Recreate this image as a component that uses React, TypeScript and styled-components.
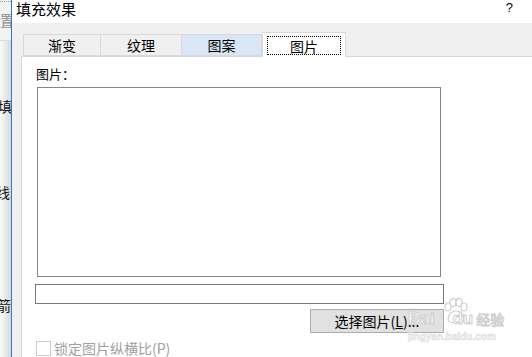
import styled, { createGlobalStyle } from "styled-components";

const GlobalStyle = createGlobalStyle`
  html, body {
    margin: 0;
    padding: 0;
    background: #ffffff;
  }
  body {
    font-family: "Noto Sans CJK SC", "Liberation Sans", sans-serif;
  }
`;

const tabs = ["渐变", "纹理", "图案", "图片"];
const tabWidths = [78, 81, 80, 84];

function App() {
  return (
    <>
      <GlobalStyle />
      <Screen>
        <BackWindow>
          <BackHead>
            <Dots />
            <BackItem $dim $top={8}>置扌</BackItem>
          </BackHead>
          <BackItem $top={57} $shift={-2}>填</BackItem>
          <BackItem $top={70} $shift={-4}>线</BackItem>
          <BackItem $top={97} $shift={-3}>箭</BackItem>
        </BackWindow>
        <Edge />
        <Dialog>
          <TitleBar>
            <Title>填充效果</Title>
            <Help>?</Help>
          </TitleBar>
          <Body>
            <TabRow>
              {tabs.map((t, i) => (
                <Tab
                  key={t}
                  $selected={i === 3}
                  $hover={i === 2}
                  style={{ width: tabWidths[i] }}
                >
                  {i === 3 ? <Focus>{t}</Focus> : t}
                </Tab>
              ))}
            </TabRow>
            <Panel>
              <Label>图片：</Label>
              <PictureBox />
              <Form>
                <PathInput />
                <Button>
                  选择图片(<u>L</u>)...
                </Button>
              </Form>
              <CheckRow>
                <CheckBox />
                <CheckLabel>锁定图片纵横比(P)</CheckLabel>
              </CheckRow>
            </Panel>
          </Body>
        </Dialog>
        <Watermark>
          <Paw viewBox="0 0 26 27">
            <g fill="#fff" stroke="#cfcfcf" strokeWidth="1.2">
              <ellipse cx="6" cy="9" rx="3" ry="4" />
              <ellipse cx="11" cy="4.5" rx="3" ry="4" />
              <ellipse cx="17" cy="4.5" rx="3" ry="4" />
              <ellipse cx="22" cy="9" rx="3" ry="4" />
              <path d="M6 22 C6 16 10 13 14 13 C18 13 22 16 22 22 C22 26 6 26 6 22 Z" />
            </g>
          </Paw>
          <MarkRow>
            <MarkBig>Bai</MarkBig>
            <MarkGap />
            <MarkBig>du</MarkBig>
            <MarkCjk>经验</MarkCjk>
          </MarkRow>
          <MarkUrl>jingyan.baidu.com</MarkUrl>
        </Watermark>
      </Screen>
    </>
  );
}

const Screen = styled.div`
  position: relative;
  display: flex;
  width: 532px;
  height: 357px;
  overflow: hidden;
  background: #ffffff;
`;

const BackWindow = styled.div`
  width: 11px;
  flex: none;
  display: flex;
  flex-direction: column;
  overflow: hidden;
  background: linear-gradient(to right, #fbfbfb, #d9d9d9);
`;

const BackHead = styled.div`
  height: 40px;
  flex: none;
  background: #f3f3f3;
  border-bottom: 1px solid #dcdcdc;
`;

const Dots = styled.div`
  height: 2px;
  margin-top: 1px;
  border-top: 1px dotted #9a9a9a;
`;

const BackItem = styled.div<{ $dim?: boolean; $top: number; $shift?: number }>`
  margin-top: ${(p) => p.$top}px;
  margin-left: ${(p) => p.$shift ?? 0}px;
  white-space: nowrap;
  font-size: 14px;
  line-height: 16px;
  color: ${(p) => (p.$dim ? "#8c8c8c" : "#111111")};
`;

const Edge = styled.div`
  width: 1px;
  flex: none;
  background: #2b79d1;
`;

const Dialog = styled.div`
  flex: 1;
  display: flex;
  flex-direction: column;
  background: #f0f0f0;
`;

const TitleBar = styled.div`
  height: 23px;
  flex: none;
  display: flex;
  align-items: center;
  justify-content: space-between;
  padding: 0 19px 0 4px;
  background: #ffffff;
`;

const Title = styled.div`
  font-size: 15px;
  line-height: 18px;
  margin-top: -6px;
  color: #000000;
`;

const Help = styled.div`
  font-family: "Liberation Sans", sans-serif;
  font-size: 13px;
  margin-top: -8px;
  color: #000000;
`;

const Body = styled.div`
  flex: 1;
  display: flex;
  flex-direction: column;
  padding: 8px 0 0 9px;
`;

const TabRow = styled.div`
  display: flex;
  align-items: flex-end;
  height: 25px;
  padding-left: 2px;
  position: relative;
  z-index: 1;
`;

const Tab = styled.div<{ $selected?: boolean; $hover?: boolean }>`
  box-sizing: border-box;
  height: ${(p) => (p.$selected ? 25 : 22)}px;
  margin-bottom: ${(p) => (p.$selected ? -1 : 0)}px;
  display: flex;
  align-items: center;
  justify-content: center;
  border: 1px solid #d9d9d9;
  border-bottom: ${(p) => (p.$selected ? "none" : "1px solid #d9d9d9")};
  border-left: ${(p) => (p.$selected ? "1px solid #d9d9d9" : "none")};
  background: ${(p) => (p.$selected ? "#ffffff" : p.$hover ? "#d8e6f6" : "#f0f0f0")};
  font-size: 14px;
  line-height: 16px;
  color: #000000;
  &:first-child {
    border-left: 1px solid #d9d9d9;
  }
`;

const Focus = styled.div`
  box-sizing: border-box;
  width: 74px;
  height: 19px;
  margin-top: 1px;
  display: flex;
  align-items: center;
  justify-content: center;
  border: 1px dotted #000000;
`;

const Panel = styled.div`
  flex: 1;
  display: flex;
  flex-direction: column;
  align-items: flex-start;
  padding: 9px 0 0 13px;
  background: #ffffff;
  border-top: 1px solid #d9d9d9;
  border-left: 1px solid #d9d9d9;
`;

const Label = styled.div`
  margin-left: 1px;
  font-size: 13px;
  line-height: 16px;
  color: #000000;
`;

const PictureBox = styled.div`
  box-sizing: border-box;
  width: 404px;
  height: 190px;
  margin: 5px 0 0 2px;
  border: 1px solid #828790;
  background: #ffffff;
`;

const Form = styled.div`
  width: 409px;
  display: flex;
  flex-direction: column;
  align-items: flex-end;
`;

const PathInput = styled.div`
  box-sizing: border-box;
  width: 409px;
  height: 20px;
  margin-top: 7px;
  border: 1px solid #7a7a7a;
  background: #ffffff;
`;

const Button = styled.div`
  box-sizing: border-box;
  width: 134px;
  height: 24px;
  margin-top: 5px;
  display: flex;
  align-items: center;
  justify-content: center;
  border: 1px solid #adadad;
  background: #e1e1e1;
  font-size: 14px;
  line-height: 16px;
  color: #000000;
  white-space: nowrap;
`;

const CheckRow = styled.div`
  display: flex;
  align-items: center;
  gap: 3px;
  margin-top: 7px;
  margin-left: 1px;
`;

const CheckBox = styled.div`
  box-sizing: border-box;
  width: 15px;
  height: 15px;
  border: 1px solid #cccccc;
  background: #ffffff;
`;

const CheckLabel = styled.div`
  font-size: 14px;
  line-height: 16px;
  color: #a0a0a0;
`;

const Watermark = styled.div`
  position: absolute;
  left: 408px;
  top: 298px;
  width: 100px;
  height: 46px;
  pointer-events: none;
`;

const Paw = styled.svg`
  position: absolute;
  left: 34px;
  top: 0;
  width: 26px;
  height: 27px;
`;

const MarkRow = styled.div`
  position: absolute;
  left: 0;
  top: 12px;
  display: flex;
  align-items: flex-end;
`;

const MarkBig = styled.span`
  font-family: "Liberation Sans", sans-serif;
  font-weight: bold;
  font-size: 17px;
  line-height: 17px;
  color: rgba(255, 255, 255, 0.85);
  -webkit-text-stroke: 1px #cfcfcf;
`;

const MarkGap = styled.span`
  width: 18px;
`;

const MarkCjk = styled.span`
  margin-left: 3px;
  font-size: 14px;
  line-height: 16px;
  color: rgba(255, 255, 255, 0.85);
  -webkit-text-stroke: 1px #d0d0d0;
`;

const MarkUrl = styled.div`
  position: absolute;
  left: 0;
  top: 34px;
  font-family: "Liberation Sans", sans-serif;
  font-weight: bold;
  font-size: 10px;
  line-height: 10px;
  color: #eeeeee;
  -webkit-text-stroke: 0.5px #dddddd;
`;

export default App;
